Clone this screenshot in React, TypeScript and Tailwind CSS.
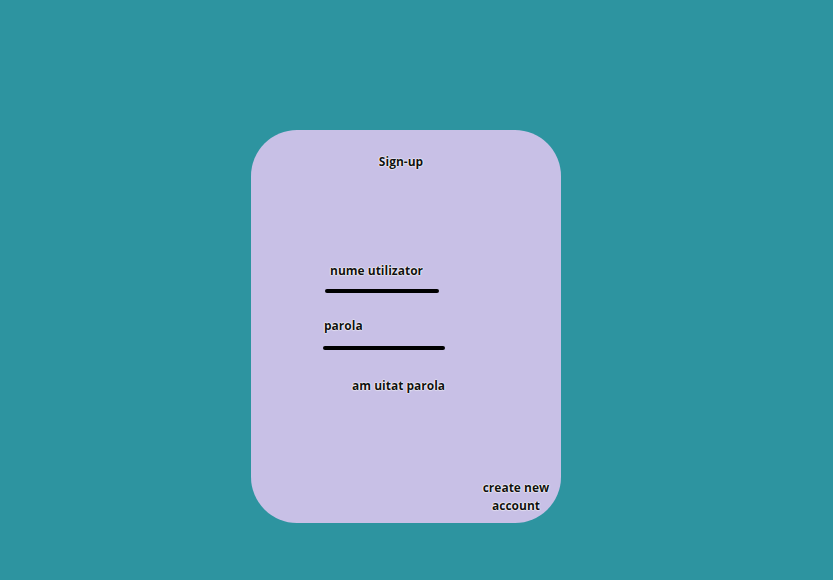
const halo = "[text-shadow:0_0_1px_#fff,0_0_1px_#fff,0_0_1px_#fff,0_0_2px_#fff]";

export default function App() {
  return (
    <main className="w-[833px] h-[580px] bg-[#2d94a0] pt-[130px] pl-[251px] font-['Open_Sans',sans-serif]">
      <div className="w-[310px] h-[393px] bg-[#c8c0e6] rounded-[46px] text-[12px] font-bold text-[#111]">
        <div className={`pt-[23px] text-center pr-[10px] leading-[18px] ${halo}`}>Sign-up</div>

        <div className={`mt-[91px] ml-[79px] leading-[18px] ${halo}`}>nume utilizator</div>
        <div className="mt-[9px] ml-[74px] w-[114px] h-[4px] rounded-full bg-black" />

        <div className={`mt-[24px] ml-[73px] leading-[18px] ${halo}`}>parola</div>
        <div className="mt-[11px] ml-[72px] w-[122px] h-[4px] rounded-full bg-black" />

        <div className={`mt-[27px] ml-[101px] leading-[18px] ${halo}`}>am uitat parola</div>

        <div className={`mt-[84px] ml-[226px] w-[78px] text-center leading-[18px] ${halo}`}>
          create new
          <br />
          account
        </div>
      </div>
    </main>
  );
}
